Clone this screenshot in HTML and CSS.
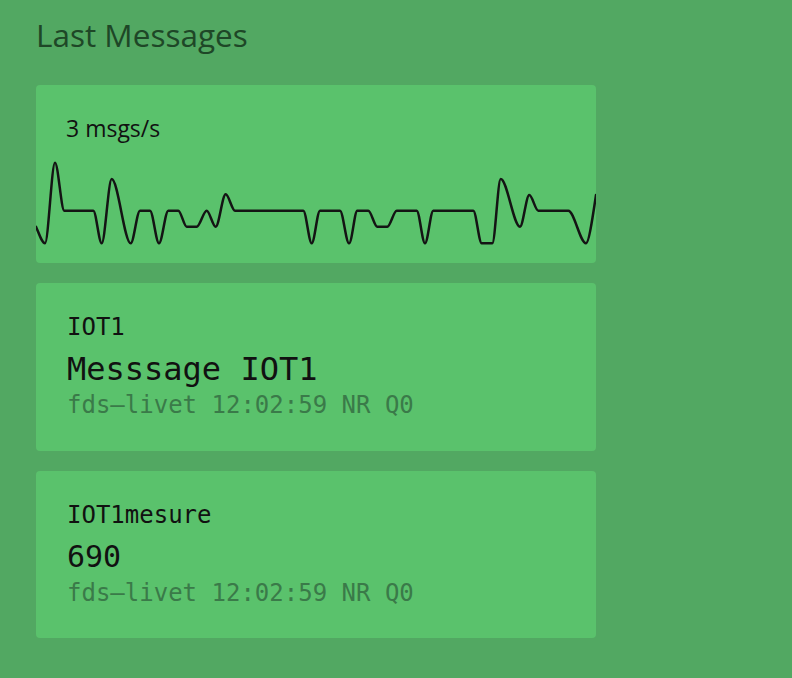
FILE: index.html
```html
<!DOCTYPE html>
<html>
<head>
<meta charset="utf-8">
<link rel="stylesheet" href="styles.css">
</head>
<body>
<main class="panel">
  <h1 class="title">Last Messages</h1>
  <section class="card card-chart">
    <div class="rate">3 msgs/s</div>
    <svg class="spark" viewBox="36 155 560 100" preserveAspectRatio="none">
      <path d="M36 226.7 C39 233.5 42 243.3 45 243.3
C48.3 243.3 51.7 162.7 55 162.7
C58.1 162.7 61.2 210.7 64.3 210.7
L93.3 210.7
C96.1 210.7 98.9 243.3 101.7 243.3
C105 243.3 108.4 179 111.7 179
C118 179 124.4 243.3 130.7 243.3
C133.8 243.3 136.9 210.7 140 210.7
L150 210.7
C153 210.7 156 243.3 159 243.3
C162.1 243.3 165.2 210.7 168.3 210.7
L178.3 210.7
C181.1 210.7 183.9 226.7 186.7 226.7
L196.7 226.7
C200 226.7 203.4 210.7 206.7 210.7
C209.7 210.7 212.7 226.7 215.7 226.7
C219 226.7 222.4 194.3 225.7 194.3
C228.8 194.3 231.9 210.7 235 210.7
L303.3 210.7
C306.1 210.7 308.9 243.3 311.7 243.3
C314.5 243.3 317.2 210.7 320 210.7
L340 210.7
C343 210.7 346 243.3 349 243.3
C352.1 243.3 354.5 210.7 357.3 210.7
L368.3 210.7
C371.3 210.7 374.3 226.7 377.3 226.7
L387.3 226.7
C390.4 226.7 393.6 210.7 396.7 210.7
L416.7 210.7
C419.5 210.7 422.2 243.3 425 243.3
C427.8 243.3 430.5 210.7 433.3 210.7
L473.3 210.7
C476.1 210.7 478.9 243.3 481.7 243.3
L492.3 243.3
C495.1 243.3 497.9 179 500.7 179
C507.1 179 513.6 226.7 520 226.7
C523.1 226.7 526.2 195 529.3 195
C532.3 195 535.3 210.7 538.3 210.7
L568.3 210.7
C574.2 210.7 580.1 243.3 586 243.3
C589 243.3 593 215 596 195" />
    </svg>
  </section>
  <section class="card card-msg">
    <div class="topic">IOT1</div>
    <div class="value value-text">Messsage IOT1</div>
    <div class="meta">fds–livet 12:02:59 NR Q0</div>
  </section>
  <section class="card card-msg">
    <div class="topic">IOT1mesure</div>
    <div class="value value-num">690</div>
    <div class="meta">fds–livet 12:02:59 NR Q0</div>
  </section>
</main>
</body>
</html>
```

FILE: styles.css
```css
html, body {
  margin: 0;
  padding: 0;
}
body {
  background: #52a862;
  width: 792px;
  height: 678px;
  overflow: hidden;
}
.panel {
  padding: 15px 0 0 36px;
  display: flex;
  flex-direction: column;
  gap: 20px;
  width: 560px;
}
.title {
  margin: 0 0 10px 0;
  font-family: "Open Sans", sans-serif;
  font-weight: 400;
  font-size: 31.5px;
  line-height: 40px;
  color: #1e4727;
}
.card {
  background: #5ac26c;
  border-radius: 4px;
  box-sizing: border-box;
}
.card-chart {
  padding: 29px 0 8px 0;
}
.rate {
  padding-left: 30px;
  font-family: "Open Sans", sans-serif;
  font-size: 23px;
  line-height: 28px;
  color: #111111;
}
.spark {
  display: block;
  margin-top: 13px;
  width: 560px;
  height: 100px;
}
.spark path {
  fill: none;
  stroke: #141414;
  stroke-width: 2.5;
  stroke-linejoin: round;
  stroke-linecap: round;
}
.card-msg {
  padding: 30px 30px 31.5px 31px;
  font-family: "DejaVu Sans Mono", monospace;
}
.topic {
  font-size: 24px;
  line-height: 28px;
  color: #111111;
}
.value {
  margin-top: 8px;
  line-height: 40px;
  color: #111111;
}
.value-text {
  font-size: 32px;
}
.value-num {
  font-size: 30px;
}
.meta {
  margin-top: 2px;
  font-size: 24px;
  line-height: 28px;
  color: #3a7a49;
}
```
